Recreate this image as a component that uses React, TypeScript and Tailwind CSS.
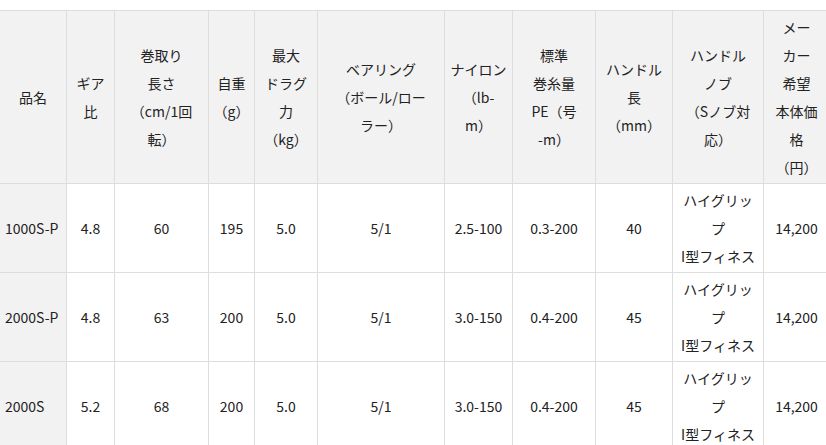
import React from "react";

const widths = [67, 48, 94, 46, 63, 127, 68, 83, 77, 91, 66];

const headers: string[][] = [
  ["品名"],
  ["ギア", "比"],
  ["巻取り", "長さ", "（cm/1回", "転）"],
  ["自重", "（g）"],
  ["最大", "ドラグ", "力", "（kg）"],
  ["ベアリング", "（ボール/ロー", "ラー）"],
  ["ナイロン", "（lb-", "m）"],
  ["標準", "巻糸量", "PE（号", "-m）"],
  ["ハンドル", "長", "（mm）"],
  ["ハンドル", "ノブ", "（Sノブ対", "応）"],
  ["メー", "カー", "希望", "本体価", "格", "（円）"],
];

const knob = ["ハイグリッ", "プ", "I型フィネス"];

const rows: (string | string[])[][] = [
  ["1000S-P", "4.8", "60", "195", "5.0", "5/1", "2.5-100", "0.3-200", "40", knob, "14,200"],
  ["2000S-P", "4.8", "63", "200", "5.0", "5/1", "3.0-150", "0.4-200", "45", knob, "14,200"],
  ["2000S", "5.2", "68", "200", "5.0", "5/1", "3.0-150", "0.4-200", "45", knob, "14,200"],
];

function Lines({ value }: { value: string | string[] }) {
  const list = Array.isArray(value) ? value : [value];
  return (
    <div className="whitespace-nowrap">
      {list.map((line, i) => (
        <div key={i}>{line}</div>
      ))}
    </div>
  );
}

export default function App() {
  return (
    <div
      className="h-[445px] w-[826px] overflow-hidden bg-white text-[14px] leading-[28px] text-[#222]"
      style={{ fontFamily: '"Noto Sans CJK JP", "Noto Sans", sans-serif' }}
    >
      <div
        className="mt-[10px] grid w-[830px] border-t border-[#ddd]"
        style={{ gridTemplateColumns: widths.map((w) => `${w}px`).join(" ") }}
      >
        {/* Header */}
        {headers.map((h, i) => (
          <div
            key={`h${i}`}
            className="flex h-[173px] items-center justify-center border-r border-b border-[#ddd] bg-[#f2f2f2] px-[2px] text-center"
          >
            <Lines value={h} />
          </div>
        ))}

        {/* Rows */}
        {rows.map((row, r) =>
          row.map((cell, c) => (
            <div
              key={`r${r}c${c}`}
              className={
                c === 0
                  ? "flex h-[89px] items-center justify-start border-r border-b border-[#ddd] bg-[#f2f2f2] pl-[5px]"
                  : "flex h-[89px] items-center justify-center border-r border-b border-[#ddd] bg-white text-center"
              }
            >
              <Lines value={cell} />
            </div>
          ))
        )}
      </div>
    </div>
  );
}
